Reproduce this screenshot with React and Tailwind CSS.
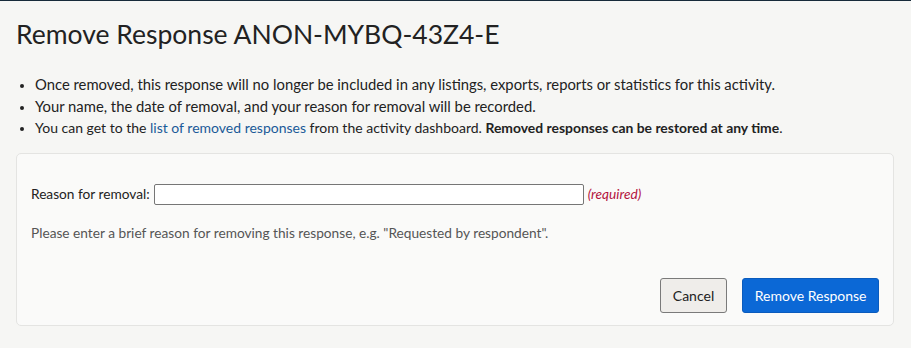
export default function App() {
    return (
        <div className="min-h-[348px] bg-[#f6f6f4] border-t border-[#172a3a] font-['Lato',sans-serif] text-[#222]">
            <div className="px-4 pt-[16px]">
                <h1 className="text-[26.5px] leading-[34px] font-normal text-[#222]">Remove Response ANON-MYBQ-43Z4-E</h1>

                <ul className="mt-[22px] pl-[19px] list-disc text-[14.8px] leading-[22px] marker:text-[#222] marker:text-[12px]">
                    <li>Once removed, this response will no longer be included in any listings, exports, reports or statistics for this activity.</li>
                    <li>Your name, the date of removal, and your reason for removal will be recorded.</li>
                    <li className="text-[14px]">
                        You can get to the <a href="#" className="text-[#1a5a98]">list of removed responses</a> from the activity dashboard.{' '}
                        <strong className="font-bold text-[13.9px]">Removed responses can be restored at any time</strong>.
                    </li>
                </ul>

                <div className="mt-[14px] mr-[1px] bg-[#fafaf9] border border-[#e4e4e2] rounded-[5px] px-[14px] pt-[30px] pb-[12px]">
                    <div className="flex items-center text-[13.7px]">
                        <label className="mr-[4px]">Reason for removal:</label>
                        <input type="text" className="w-[430px] h-[21px] bg-white border border-[#767676] rounded-[2px] outline-none px-1" />
                        <span className="ml-[4px] italic text-[#b3123e]">(required)</span>
                    </div>
                    <p className="mt-[18px] text-[13.7px] text-[#555]">
                        Please enter a brief reason for removing this response, e.g. "Requested by respondent".
                    </p>
                    <div className="mt-[34px] flex justify-end gap-[15px]">
                        <button className="h-[35px] px-[12px] text-[14px] text-[#222] bg-[#efedea] border border-[#7a7a7a] rounded-[3px]">Cancel</button>
                        <button className="h-[35px] px-[11.5px] text-[14px] text-white bg-[#0b68d6] border border-[#0a5bbd] rounded-[3px]">Remove Response</button>
                    </div>
                </div>
            </div>
        </div>
    );
}
